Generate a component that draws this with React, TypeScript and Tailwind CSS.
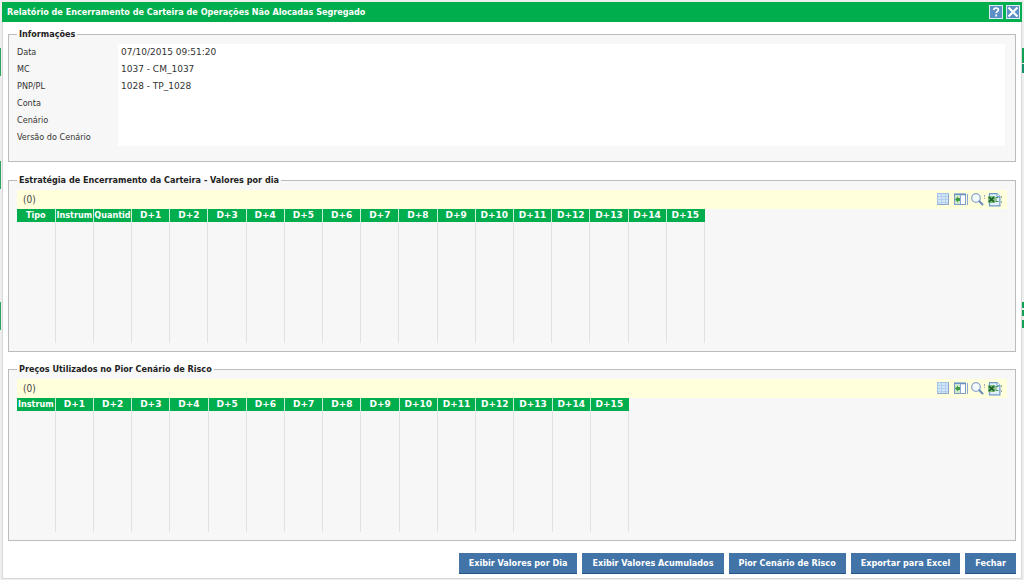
import React from 'react';

const days = Array.from({ length: 15 }, (_, i) => `D+${i + 1}`);

const info = [
    { label: 'Data', value: '07/10/2015 09:51:20' },
    { label: 'MC', value: '1037 - CM_1037' },
    { label: 'PNP/PL', value: '1028 - TP_1028' },
    { label: 'Conta', value: '' },
    { label: 'Cenário', value: '' },
    { label: 'Versão do Cenário', value: '' },
];

const actions = [
    'Exibir Valores por Dia',
    'Exibir Valores Acumulados',
    'Pior Cenário de Risco',
    'Exportar para Excel',
    'Fechar',
];

function GridIcon() {
    return (
        <svg width="13" height="13" viewBox="0 0 13 13">
            <rect x="0.5" y="0.5" width="11" height="11" fill="#d3e6f8" stroke="#a3c3e6" />
            <path d="M1 3.5h10M1 6.5h10M1 9.5h10M4.5 1v10M8.5 1v10" stroke="#b4d0ee" />
            <path d="M0.5 11.5h11V1" stroke="#8fa9cc" fill="none" />
        </svg>
    );
}

function ColumnsIcon() {
    return (
        <svg width="14" height="13" viewBox="0 0 14 13">
            <rect x="0.5" y="1" width="11" height="10.5" fill="#fff" stroke="#7f9fcb" />
            <path d="M0 1.5h12" stroke="#6a92c4" strokeWidth="1.500" />
            <rect x="1" y="2" width="5" height="9" fill="#cfe8cb" />
            <path d="M1 6.500L4 3.500v1.500H6.500v3H4v1.500z" fill="#3f9a43" />
            <path d="M6.500 2v9M13.500 1v11" stroke="#8aa8d4" />
        </svg>
    );
}

function SearchIcon() {
    return (
        <svg width="14" height="13" viewBox="0 0 14 13">
            <circle cx="5" cy="5" r="4.300" fill="#f3f9ff" stroke="#8fa9c9" strokeWidth="1.300" />
            <path d="M8.300 8.300l3.200 3.200" stroke="#6c8db8" strokeWidth="2" strokeLinecap="round" />
            <path d="M13.500 2v2M13.500 5v1" stroke="#a9a9b8" />
        </svg>
    );
}

function ExcelIcon() {
    return (
        <svg width="14" height="14" viewBox="0 0 14 14">
            <path d="M1.500 0.600h7.500l2.900 2.900v9.400H1.500z" fill="#e3effa" stroke="#6f9acb" strokeWidth="1.200" />
            <path d="M9 0.600v3h3" fill="#fff" stroke="#6f9acb" />
            <rect x="0" y="3" width="7" height="7" fill="#7fbd80" />
            <path d="M1 4.200l5 4.600M6 4.200l-5 4.600" stroke="#1d6026" strokeWidth="1.600" />
            <path d="M7.500 4.500h3M7.500 8.500h3M8 4.500v4" fill="none" stroke="#4a9a50" />
            <path d="M13.500 3v2M13.500 8v2" stroke="#9fb4a0" />
        </svg>
    );
}

const tools = [
    { label: 'Grade', Icon: GridIcon },
    { label: 'Colunas', Icon: ColumnsIcon },
    { label: 'Pesquisar', Icon: SearchIcon },
    { label: 'Excel', Icon: ExcelIcon },
];

function Section({ title, className, children }: { title: string; className: string; children: React.ReactNode }) {
    return (
        <fieldset className={`min-w-0 border border-[#bcbcbc] bg-[#f7f7f7] px-2 ${className}`}>
            <legend className="h-3 px-[2px] text-[9px] leading-3 font-bold text-[#222]">{title}</legend>
            {children}
        </fieldset>
    );
}

function Grid({ names, className }: { names: string[]; className: string }) {
    const th = 'border-r border-[#c8ecd6] p-0 text-[9px] leading-[13px] font-bold whitespace-nowrap text-white last:border-[#00ae4d]';
    return (
        <div className="pt-1">
            <div className="flex h-[19px] items-center justify-between bg-[#ffffdc] pr-[5px] pl-[6px] text-[10px] text-[#444]">
                <span>(0)</span>
                <div className="flex items-center gap-[3px]">
                    {tools.map(({ label, Icon }) => (
                        <button key={label} type="button" aria-label={label} className="flex w-[14px] cursor-pointer">
                            <Icon />
                        </button>
                    ))}
                </div>
            </div>
            <table className={`table-fixed border-collapse ${className}`}>
                <thead>
                    <tr className="h-[13px] bg-[#00ae4d]">
                        {names.map((name) => (
                            <th key={name} className={th}>{name}</th>
                        ))}
                        {days.map((day) => (
                            <th key={day} className={`font-['DejaVu_Sans'] ${th}`}>{day}</th>
                        ))}
                    </tr>
                </thead>
                <tbody>
                    <tr className="h-[121px]">
                        {[...names, ...days].map((column) => (
                            <td key={column} className="border-r border-[#e2e2e2] p-0" />
                        ))}
                    </tr>
                </tbody>
            </table>
        </div>
    );
}

export default function App() {
    return (
        <div className="flex min-h-screen bg-[#eeeeee] font-['DejaVu_Sans_Condensed','DejaVu_Sans',sans-serif] text-[#333]">
            {/* Page behind the dialog, left edge */}
            <div className="w-[2px] shrink-0 pt-12">
                <div className="h-7 w-px bg-[#2da562]" />
                <div className="mt-[85px] h-7 w-px bg-[#2da562]" />
                <div className="mt-[113px] h-7 w-px bg-[#2da562]" />
            </div>

            <main className="flex min-w-0 flex-1 flex-col pt-[2px] pb-[1px]">
                <header className="flex h-5 items-center justify-between bg-[#00ae4d] pr-[2px] pl-[5px]">
                    <h1 className="text-[9px] leading-5 font-bold text-white">
                        Relatório de Encerramento de Carteira de Operações Não Alocadas Segregado
                    </h1>
                    <div className="flex gap-[3px]">
                        <button type="button" aria-label="Ajuda" className="cursor-pointer">
                            <svg width="14" height="14" viewBox="0 0 14 14">
                                <rect x="0.500" y="0.500" width="13" height="13" fill="#5c8fc6" stroke="#dcebf5" />
                                <path d="M4.800 5c0-2.700 4.600-2.600 4.600 0 0 1.500-2.200 1.500-2.200 3.300M7.200 9.600v1.800" fill="none" stroke="#fff" strokeWidth="1.700" />
                            </svg>
                        </button>
                        <button type="button" aria-label="Fechar janela" className="cursor-pointer">
                            <svg width="14" height="14" viewBox="0 0 14 14">
                                <rect x="0.500" y="0.500" width="13" height="13" fill="#5c8fc6" stroke="#dcebf5" />
                                <path d="M2.500 2.500l9 9M11.500 2.500l-9 9" stroke="#fff" strokeWidth="2.200" />
                            </svg>
                        </button>
                    </div>
                </header>

                <div className="flex flex-1 flex-col border border-t-0 border-[#d8d8d8] bg-white px-[5px] pt-[6px]">
                    <Section title="Informações" className="pb-[15px]">
                        <dl className="pt-1 pr-[2px] text-[9px] leading-[17px]">
                            {info.map(({ label, value }) => (
                                <div key={label} className="flex h-[17px]">
                                    <dt className="w-[101px] shrink-0">{label}</dt>
                                    <dd className="flex-1 bg-white pl-[3px] font-['DejaVu_Sans']">{value}</dd>
                                </div>
                            ))}
                        </dl>
                    </Section>

                    <Section title="Estratégia de Encerramento da Carteira - Valores por dia" className="mt-3 pb-2">
                        <Grid names={['Tipo', 'Instrum', 'Quantid']} className="w-[688px]" />
                    </Section>

                    <Section title="Preços Utilizados no Pior Cenário de Risco" className="mt-[11px] pb-2">
                        <Grid names={['Instrum']} className="w-[612px]" />
                    </Section>

                    <footer className="flex justify-end gap-[5px] pt-3 pb-1">
                        {actions.map((action) => (
                            <button
                                key={action}
                                type="button"
                                className="h-[21px] cursor-pointer border-b border-[#24528a] bg-[#4274a8] px-[10px] pt-px text-[9px] font-bold text-white"
                            >
                                {action}
                            </button>
                        ))}
                    </footer>
                </div>
            </main>

            {/* Page behind the dialog, right edge */}
            <div className="flex w-[2px] shrink-0 flex-col pt-12">
                <div className="h-[15px] bg-[#12a154]" />
                <div className="mt-px h-[9px] bg-[#12906a]" />
                <div className="mt-[229px] h-[6px] bg-[#12a154]" />
                <div className="mt-[2px] h-[6px] bg-[#12a154]" />
                <div className="mt-1 h-2 bg-[#12a154]" />
            </div>
        </div>
    );
}
